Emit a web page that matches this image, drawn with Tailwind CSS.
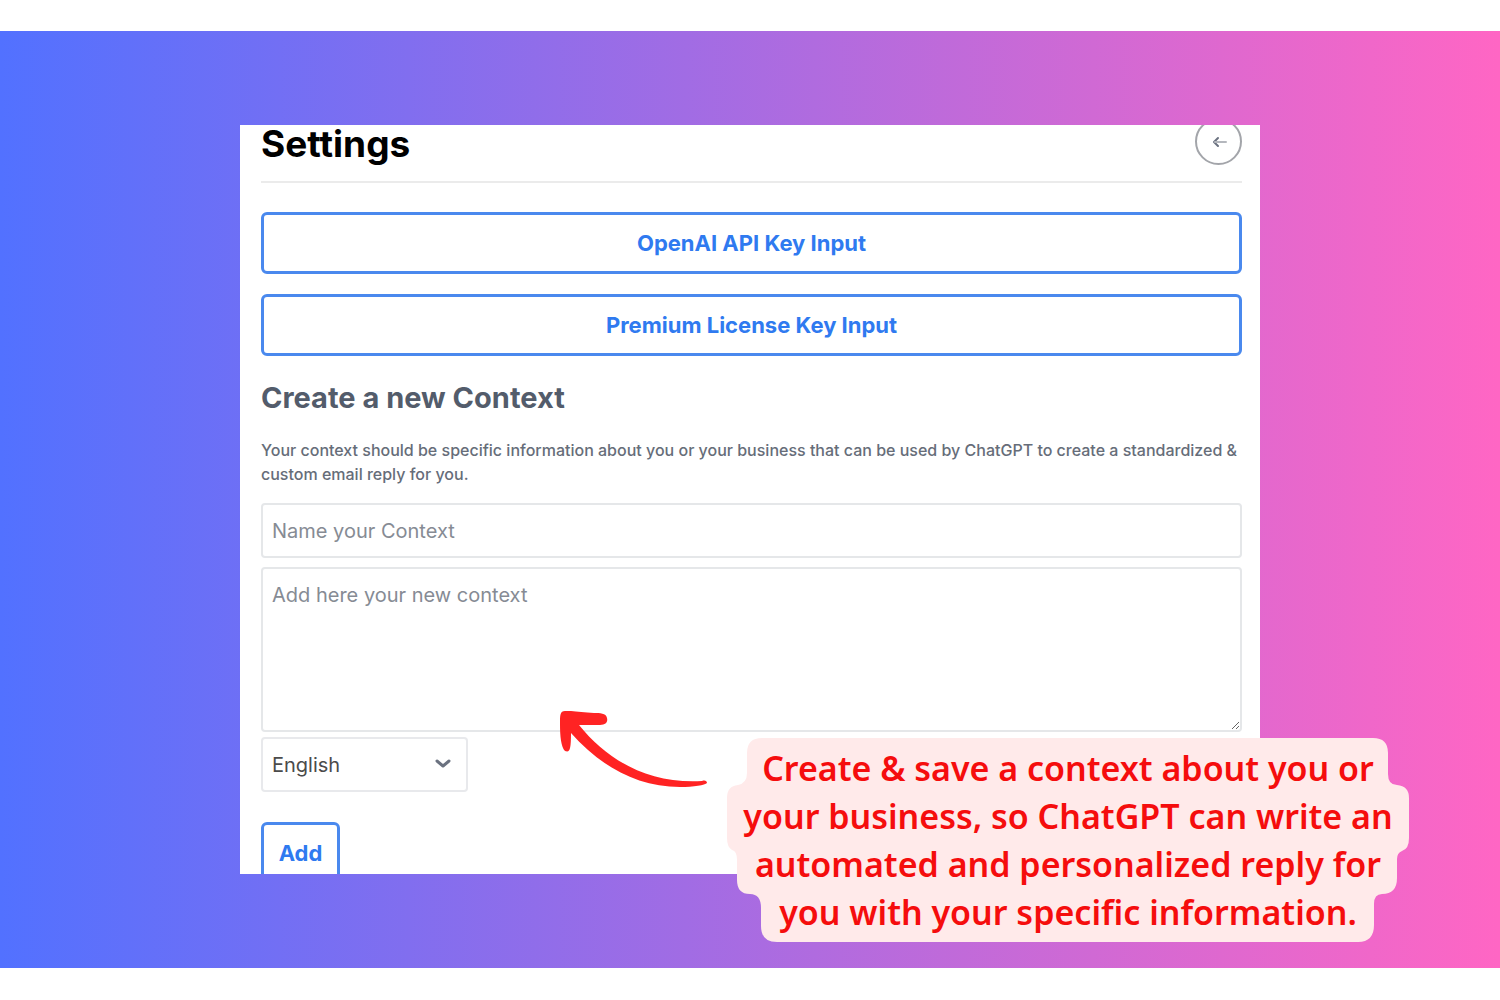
<!DOCTYPE html>
<html lang="en">
<head>
<meta charset="utf-8">
<meta name="viewport" content="width=device-width, initial-scale=1">
<title>Settings</title>
<script src="https://cdn.jsdelivr.net/npm/@tailwindcss/browser@4"></script>
</head>
<body class="min-h-screen bg-white py-[31px] font-['Inter',sans-serif]">
<main class="relative flex justify-center bg-linear-to-r/srgb from-[#5271ff] to-[#ff66c4] py-[94px]">
  <section class="h-[749px] w-[68%] overflow-hidden bg-white pr-[18px] pl-[21px]">
    <header class="flex h-[58px] items-end justify-between border-b-2 border-[#ebebeb] pb-4">
      <h1 class="text-[37px] leading-[42px] font-bold text-black">Settings</h1>
      <button type="button" aria-label="Back" class="flex size-[47px] shrink-0 items-center justify-center rounded-full border-2 border-[#a3a5aa] text-[#6b7280]">
        <svg class="size-4" viewBox="0 0 16 16" fill="none" stroke="currentColor" stroke-width="2" stroke-linecap="round" stroke-linejoin="round"><path d="M7 4 3 8l4 4"/><path d="M4 8h11" stroke="#b4b7bd"/></svg>
      </button>
    </header>
    <div class="mt-[29px] flex flex-col gap-5">
      <button type="button" class="h-[62px] rounded-md border-3 border-[#4a89ee] text-[22px] font-bold text-[#2f7af0]">OpenAI API Key Input</button>
      <button type="button" class="h-[62px] rounded-md border-3 border-[#4a89ee] text-[22px] font-bold text-[#2f7af0]">Premium License Key Input</button>
    </div>
    <h2 class="mt-6 text-[29px] leading-9 font-bold text-[#535c6b]">Create a new Context</h2>
    <p class="mt-[22px] text-[16px] leading-6 font-medium text-[#666d79]">Your context should be specific information about you or your business that can be used by ChatGPT to create a standardized &amp; custom email reply for you.</p>
    <form class="mt-[17px]">
      <input type="text" aria-label="Context name" placeholder="Name your Context" class="block h-[55px] w-full rounded border-2 border-[#e5e7e9] px-[9px] text-[20px] placeholder:text-[#868b94]">
      <textarea aria-label="New context" placeholder="Add here your new context" class="mt-[9px] block h-[165px] w-full resize rounded border-2 border-[#e5e7e9] px-[9px] py-[10px] text-[20px] leading-8 placeholder:text-[#868b94]"></textarea>
      <div class="relative mt-[5px] w-[207px]">
        <select aria-label="Language" class="block h-[55px] w-full appearance-none rounded border-2 border-[#e8e9ec] bg-white px-[9px] text-[20px] text-[#4b4b4b]"><option>English</option></select>
        <svg class="pointer-events-none absolute top-[21px] right-4 h-3 w-[18px]" viewBox="0 0 18 12" fill="none" stroke="#6b7280" stroke-width="3" stroke-linecap="round" stroke-linejoin="round"><path d="m3 3 6 5 6-5"/></svg>
      </div>
      <button type="button" class="mt-[30px] h-[62px] w-[79px] rounded-md border-3 border-[#4a89ee] text-[22px] font-bold text-[#2f7af0]">Add</button>
    </form>
  </section>

  <svg class="absolute top-[676px] left-[37%] h-[84px] w-[156px]" viewBox="0 0 156 84" fill="#ff2323"><path d="M10 4C5 4 5 8 5 17C5 29 6 40 10 44C15 46 16 42 16 26C45 59 82 80 125 80C139 80 150 78 152 76C152 74 150 73 147 74C94 77 53 54 24 18H45C51 18 53 15 52 11C51 6 45 6 39 6Q25 5 16 4Z"/></svg>

  <div class="absolute top-[707px] left-[48.4%] w-[684px]">
    <svg class="block h-[204px] w-full" viewBox="0 0 684 204" fill="#ffeaea"><path d="M36 0H647Q662 0 662 15V36Q662 47 671 47Q683 48 683 60V100Q683 111 676 113Q671 115 671 121V140Q671 156 656 156Q648 156 648 166V187Q648 204 632 204H51Q35 204 35 188V170Q35 156 24 156Q11 156 11 142V122Q11 113 6 112Q1 109 1 100V60Q1 48 12 47Q21 45 21 35V15Q21 0 36 0Z"/></svg>
    <p class="absolute inset-x-0 top-[6px] text-center font-['Noto_Sans'] text-[34px] leading-[48px] font-semibold whitespace-nowrap text-[#f50d0d]">Create &amp; save a context about you or<br>your business, so ChatGPT can write an<br>automated and personalized reply for<br>you with your specific information.</p>
  </div>
</main>
</body>
</html>
